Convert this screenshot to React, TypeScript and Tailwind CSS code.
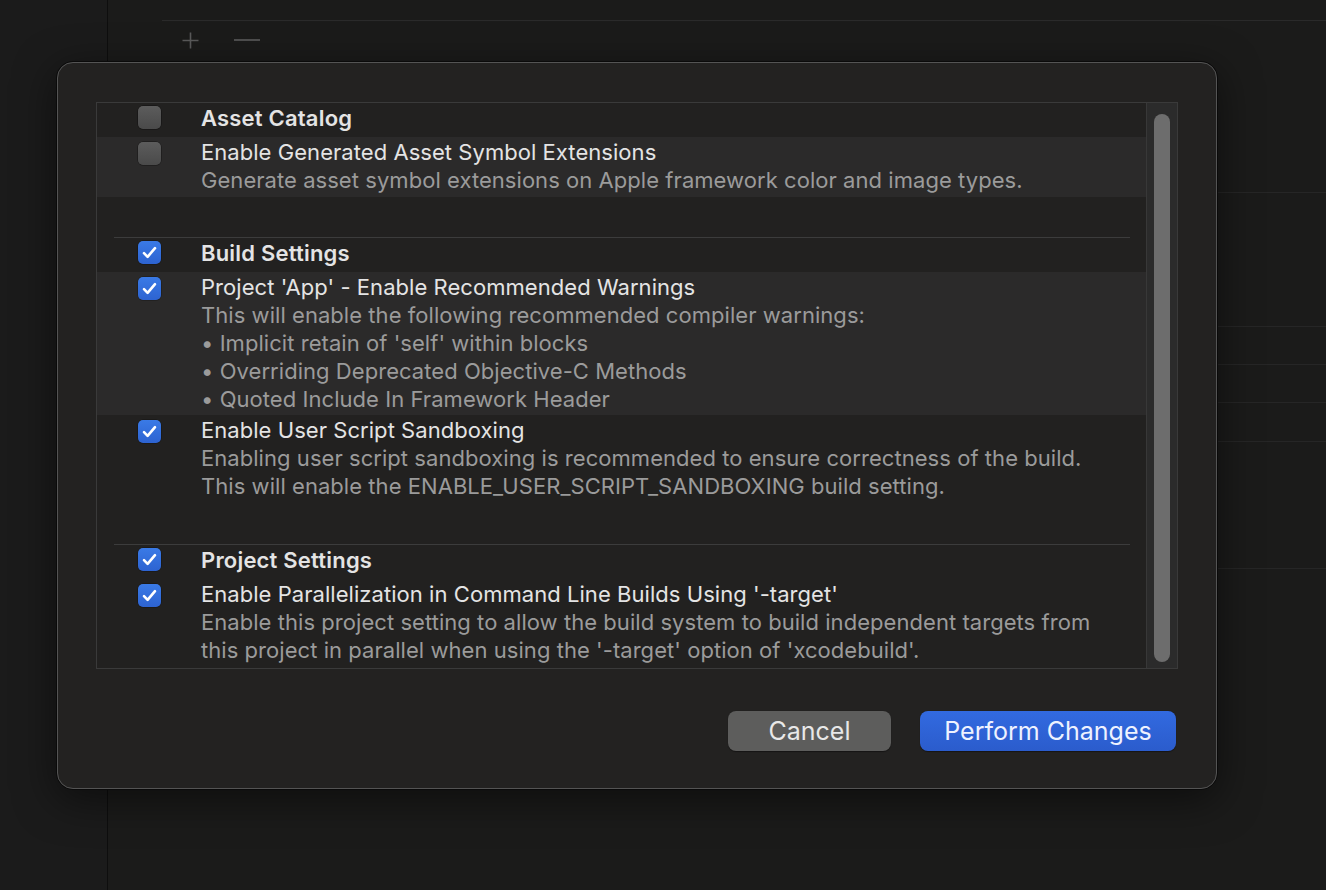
import React from "react";

function CheckBox({ checked }: { checked: boolean }) {
  if (checked) {
    return (
      <div className="w-[23px] h-[23px] rounded-[5px] bg-gradient-to-b from-[#3a7ae6] to-[#2d63d1] flex items-center justify-center shrink-0 shadow-[0_0_0_0.5px_rgba(0,0,0,0.4)]">
        <svg width="15" height="13" viewBox="0 0 15 13" fill="none">
          <path d="M2 7.2 L5.6 10.8 L13 2.2" stroke="white" strokeWidth="2.6" strokeLinecap="round" strokeLinejoin="round" />
        </svg>
      </div>
    );
  }
  return (
    <div className="w-[23px] h-[23px] rounded-[5px] bg-gradient-to-b from-[#5c5c5c] to-[#4a4a4a] shrink-0 shadow-[0_0_0_0.5px_rgba(0,0,0,0.5)]" />
  );
}

function Header({ title, checked }: { title: string; checked: boolean }) {
  return (
    <div className="flex items-start pt-[1px] pb-[5px]">
      <div className="w-[104px] pl-[41px] pt-[2px] shrink-0">
        <CheckBox checked={checked} />
      </div>
      <div className="leading-[28px] text-[22px] font-semibold text-[#e4e4e4] tracking-[0.2px]">{title}</div>
    </div>
  );
}

function Item({
  title,
  lines,
  checked,
  highlight,
  pb = "pb-[2px]",
}: {
  title: string;
  lines: string[];
  checked: boolean;
  highlight?: boolean;
  pb?: string;
}) {
  return (
    <div className={`flex items-start pt-[1px] ${pb} ${highlight ? "bg-[#2b2a2a]" : ""}`}>
      <div className="w-[104px] pl-[41px] pt-[4px] shrink-0">
        <CheckBox checked={checked} />
      </div>
      <div className="leading-[28px] text-[22px] whitespace-nowrap tracking-[0.05px]">
        <div className="text-[#e4e4e4]">{title}</div>
        {lines.map((l, i) => (
          <div key={i} className="text-[#9b9b9b]">
            {l}
          </div>
        ))}
      </div>
    </div>
  );
}

function Divider() {
  return <div className="ml-[17px] w-[1016px] h-[1px] bg-[#3c3c3c]" />;
}

export default function App() {
  return (
    <div
      className="relative w-[1326px] h-[890px] overflow-hidden bg-[#1b1b1a] flex"
      style={{ fontFamily: "Inter, 'Noto Sans', sans-serif" }}
    >
      {/* background window */}
      <div className="w-[108px] h-full bg-[#1b1b1b] border-r border-[#0e0e0e] shrink-0" />
      <div className="flex-1 h-full flex flex-col">
        <div className="h-[20px]" />
        <div className="ml-[54px] h-[1px] bg-[#2a2a2a]" />
        <div className="ml-[74px] h-[38px] flex items-center gap-[35px] text-[#555]">
          <svg width="17" height="17" viewBox="0 0 17 17">
            <path d="M8.5 0.5 V16.5 M0.5 8.5 H16.5" stroke="#5a5a5a" strokeWidth="1.6" />
          </svg>
          <svg width="26" height="4" viewBox="0 0 26 4">
            <path d="M0 2 H26" stroke="#4f4f4f" strokeWidth="2" />
          </svg>
        </div>
        <div className="h-[133px]" />
        <div className="h-[1px] bg-[#262626]" />
        <div className="h-[133px]" />
        <div className="h-[1px] bg-[#262626]" />
        <div className="h-[37px]" />
        <div className="h-[1px] bg-[#262626]" />
        <div className="h-[37px]" />
        <div className="h-[1px] bg-[#262626]" />
        <div className="h-[38px]" />
        <div className="h-[1px] bg-[#262626]" />
        <div className="h-[126px]" />
        <div className="h-[1px] bg-[#262626]" />
      </div>

      {/* dialog overlay */}
      <div className="absolute left-[56px] top-[61px] w-[1162px] h-[729px] rounded-[17px] border border-[#0a0a0a] shadow-[0_10px_40px_rgba(0,0,0,0.5)]">
        <div className="w-full h-full rounded-[16px] border border-[#545454] bg-[#232221] pt-[39px] pl-[38px] flex flex-col">
          <div className="w-[1082px] h-[567px] border border-[#3a3a3a] bg-[#222120] flex">
            <div className="flex-1 flex flex-col overflow-hidden">
              <Header title="Asset Catalog" checked={false} />
              <Item
                title="Enable Generated Asset Symbol Extensions"
                lines={["Generate asset symbol extensions on Apple framework color and image types."]}
                checked={false}
                highlight
                pb="pb-[3px]"
              />
              <div className="h-[40px]" />
              <Divider />
              <Header title="Build Settings" checked={true} />
              <Item
                title="Project 'App' - Enable Recommended Warnings"
                lines={[
                  "This will enable the following recommended compiler warnings:",
                  "• Implicit retain of 'self' within blocks",
                  "• Overriding Deprecated Objective-C Methods",
                  "• Quoted Include In Framework Header",
                ]}
                checked={true}
                highlight
                pb="pb-[2px]"
              />
              <Item
                title="Enable User Script Sandboxing"
                lines={[
                  "Enabling user script sandboxing is recommended to ensure correctness of the build.",
                  "This will enable the ENABLE_USER_SCRIPT_SANDBOXING build setting.",
                ]}
                checked={true}
                pb="pb-[44px]"
              />
              <Divider />
              <Header title="Project Settings" checked={true} />
              <Item
                title="Enable Parallelization in Command Line Builds Using '-target'"
                lines={[
                  "Enable this project setting to allow the build system to build independent targets from",
                  "this project in parallel when using the '-target' option of 'xcodebuild'.",
                ]}
                checked={true}
              />
            </div>
            <div className="w-[31px] h-full bg-[#2b2b2b] border-l border-[#383838] flex justify-center pt-[11px] pb-[6px] shrink-0">
              <div className="w-[16px] h-full rounded-full bg-[#6d6d6d]" />
            </div>
          </div>
          <div className="flex justify-end gap-[29px] pr-[40px] mt-[42px]">
            <button className="w-[163px] h-[40px] rounded-[8px] bg-[#5d5d5c] text-[25px] text-[#e8e8e8] flex items-center justify-center pt-[1px] shadow-[0_0.5px_1px_rgba(0,0,0,0.4)]">
              Cancel
            </button>
            <button className="w-[256px] h-[40px] rounded-[8px] bg-gradient-to-b from-[#326ae0] to-[#2b5ccc] text-[25px] text-[#eef2ff] flex items-center justify-center pt-[1px] shadow-[0_0.5px_1px_rgba(0,0,0,0.4)]">
              Perform Changes
            </button>
          </div>
        </div>
      </div>
    </div>
  );
}
